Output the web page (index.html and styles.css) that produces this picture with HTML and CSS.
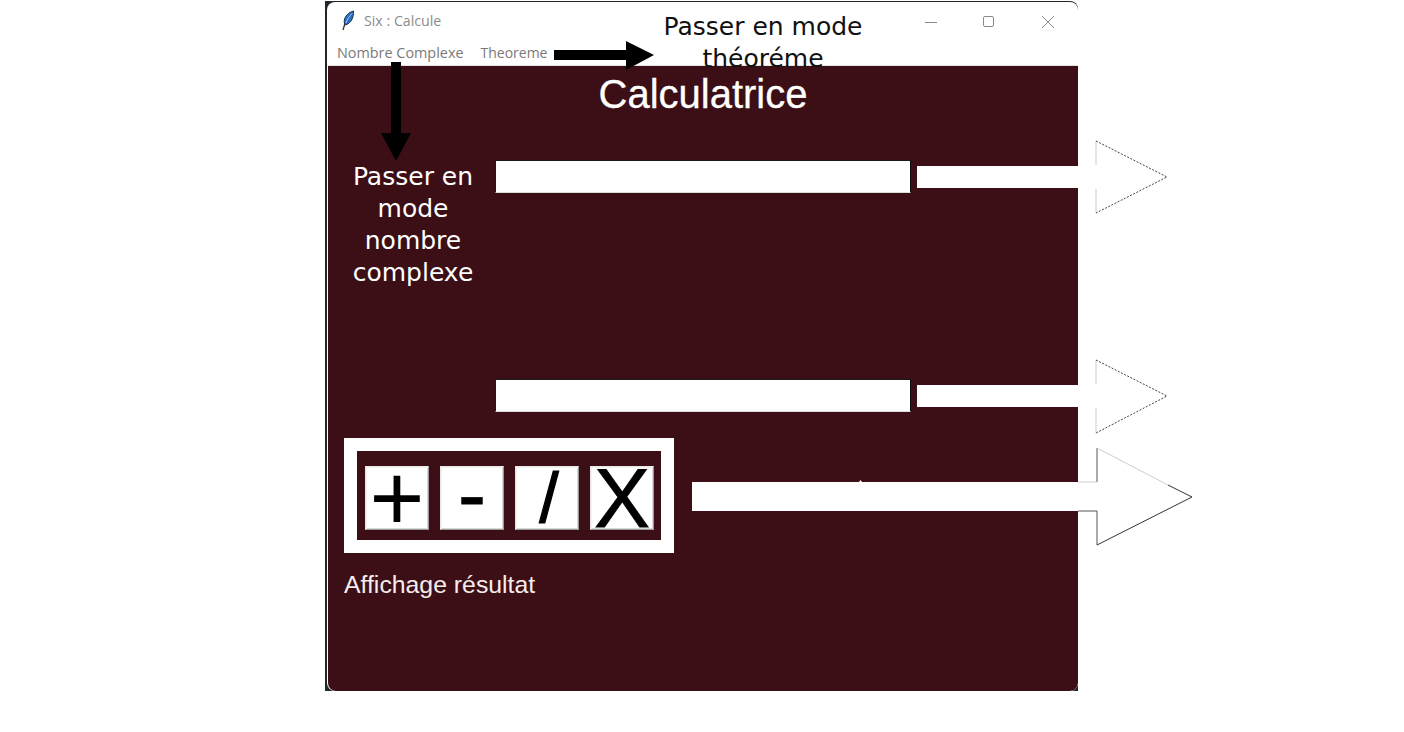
FILE: index.html
```html
<!DOCTYPE html>
<html lang="fr">
<head>
<meta charset="utf-8">
<title>Six : Calcule</title>
<link rel="stylesheet" href="styles.css">
</head>
<body>
<div class="window">
  <div class="frame">
    <header class="titlebar">
      <svg class="feather" width="14" height="22" viewBox="0 0 14 22"><path d="M2 20 C3 17 3.500 15 4 13" fill="none" stroke="#333" stroke-width="1.300"/><path d="M4 15 C1.500 10 5 3 12.500 1 C13 7 10 14 4 15 Z" fill="#2f6fc0" stroke="#1b2f55" stroke-width="1"/><path d="M5 13 C6.500 9 8.500 6 11 3.500" fill="none" stroke="#9cc6f0" stroke-width="1"/></svg>
      <span class="app-title">Six : Calcule</span>
      <div class="controls">
        <svg width="14" height="14" viewBox="0 0 14 14"><path d="M1 7.500H13" stroke="#8a8a8a" fill="none"/></svg>
        <svg width="14" height="14" viewBox="0 0 14 14"><rect x="1.500" y="1.500" width="10" height="10" rx="1.500" stroke="#8a8a8a" fill="none"/></svg>
        <svg width="14" height="14" viewBox="0 0 14 14"><path d="M2 1L14 13M14 1L2 13" stroke="#8a8a8a" fill="none"/></svg>
      </div>
    </header>
    <nav class="menubar">
      <span class="menu-item">Nombre Complexe</span>
      <span class="menu-item menu-item-short">Theoreme</span>
    </nav>
    <main class="calc">
      <h1 class="calc-title">Calculatrice</h1>
      <input class="field field-first" type="text" aria-label="Premier nombre">
      <input class="field field-second" type="text" aria-label="Second nombre">
      <div class="ops">
        <button class="op op-plus" type="button">+</button>
        <button class="op op-minus" type="button">-</button>
        <button class="op op-slash" type="button">/</button>
        <button class="op" type="button">X</button>
      </div>
      <p class="result">Affichage résultat</p>
    </main>
  </div>
</div>

<p class="note note-theorem">Passer en mode<br>théoréme</p>
<p class="note note-complex">Passer en<br>mode<br>nombre<br>complexe</p>

<svg class="overlay" width="1404" height="732" viewBox="0 0 1404 732">
  <path d="M554 50H626V41L654 55L626 70V60H554Z" fill="#000"/>
  <path d="M391 62H401V133H411L396 161L381 133H391Z" fill="#000"/>

  <path d="M917 166H1096V141L1167 177L1096 213V188H917Z" fill="#fff"/>
  <path d="M1096 141V165M1096 189V213" stroke="#ccc" fill="none"/>
  <path d="M1096 141L1167 177L1096 213" stroke="#444" stroke-dasharray="2 1.500" fill="none"/>

  <path d="M917 385H1096V360L1167 396L1096 433V407H917Z" fill="#fff"/>
  <path d="M1096 360V384M1096 408V433" stroke="#ccc" fill="none"/>
  <path d="M1096 360L1167 396L1096 433" stroke="#444" stroke-dasharray="2 1.500" fill="none"/>

  <path d="M692 482H859L860.500 480L862 482H1097V448L1192 497L1097 545V511H692Z" fill="#fff"/>
  <path d="M1097 448V482M1097 511V545M1078 511H1097" stroke="#555" fill="none"/>
  <path d="M1078 482H1097M1097 448L1168 485" stroke="#ccc" fill="none"/>
  <path d="M1168 485L1192 497L1097 545" stroke="#333" fill="none"/>
</svg>
</body>
</html>
```
FILE: styles.css
```css
* {
  box-sizing: border-box;
}

html,
body {
  margin: 0;
  height: 732px;
  overflow: hidden;
  background: #fff;
}

.window {
  width: 753px;
  height: 690px;
  margin: 1px 0 0 325px;
  padding: 1px 0 0 2px;
  background: #20262c;
  border-radius: 0 8px 0 0;
}

.frame {
  display: flex;
  flex-direction: column;
  height: 100%;
  background: #fff;
  border-radius: 8px;
  overflow: hidden;
  font-family: "Open Sans", "Noto Sans", sans-serif;
}

.titlebar {
  display: flex;
  align-items: center;
  height: 34px;
  padding-left: 14px;
  padding-top: 6px;
  flex: none;
}

.feather {
  flex: none;
  margin-top: -2px;
}

.app-title {
  margin-left: 9px;
  margin-top: -3px;
  font-size: 14.200px;
  color: #8c8c8c;
}

.controls {
  display: flex;
  gap: 44px;
  margin-left: auto;
  margin-right: 24px;
  margin-top: -1px;
}

.menubar {
  display: flex;
  gap: 17px;
  height: 30px;
  flex: none;
  padding: 7px 0 0 10px;
  font-size: 14.400px;
  line-height: 20px;
  color: #7c7878;
  border-bottom: 1px solid #e4e4e4;
}

.menu-item-short {
  font-size: 14px;
}

.calc {
  flex: 1;
  display: flex;
  flex-direction: column;
  align-items: center;
  margin-left: 1px;
  background: #3b0f15;
  border-radius: 0 0 8px 8px;
  font-family: "Liberation Sans", Arial, sans-serif;
}

.calc-title {
  margin: 5px 0 0;
  font-size: 40px;
  font-weight: 400;
  line-height: 46px;
  color: #fff;
  -webkit-text-stroke: 0.3px #fff;
}

.field {
  display: block;
  width: 416px;
  height: 33px;
  padding: 0;
  background: #fff;
  border: 1px solid;
  border-color: #1a1a1a #0d0d0d #ddd #1a1a1a;
  border-radius: 0;
}

.field-first {
  margin-top: 43px;
}

.field-second {
  margin-top: 186px;
}

.ops {
  align-self: flex-start;
  display: flex;
  gap: 11px;
  width: 330px;
  height: 115px;
  margin: 26px 0 0 16px;
  padding: 15px 8px 0 8px;
  background: #3b0f15;
  border: 13px solid #fff;
}

.op {
  display: flex;
  align-items: center;
  justify-content: center;
  flex: none;
  width: 64px;
  height: 64px;
  padding: 0;
  background: #fff;
  border: 1px solid;
  border-color: #e8e8e8 #9a9a9a #9a9a9a #e8e8e8;
  box-shadow: inset 1px 1px 0 #f2f2f2, inset -1px -1px 0 #d8d8d8;
  font-family: "Liberation Sans", Arial, sans-serif;
  font-size: 84px;
  line-height: 64px;
  color: #000;
  -webkit-text-stroke: 0.8px #000;
}

.op-plus {
  font-size: 94px;
  -webkit-text-stroke: 0;
}

.op-minus {
  padding-bottom: 9px;
}

.op-slash {
  padding-left: 4px;
  font-size: 70px;
  -webkit-text-stroke: 1.200px #000;
}

.result {
  align-self: flex-start;
  margin: 17px 0 0 16px;
  font-size: 24.800px;
  line-height: 30px;
  color: #f6ecec;
}

.note {
  position: absolute;
  margin: 0;
  font-family: "DejaVu Sans", Verdana, sans-serif;
  font-size: 25px;
  line-height: 32px;
  text-align: center;
  white-space: nowrap;
}

.note-theorem {
  left: 643px;
  top: 11px;
  width: 240px;
  color: #111;
}

.note-complex {
  left: 333px;
  top: 161px;
  width: 160px;
  color: #fff;
}

.overlay {
  position: absolute;
  left: 0;
  top: 0;
  pointer-events: none;
}
```
